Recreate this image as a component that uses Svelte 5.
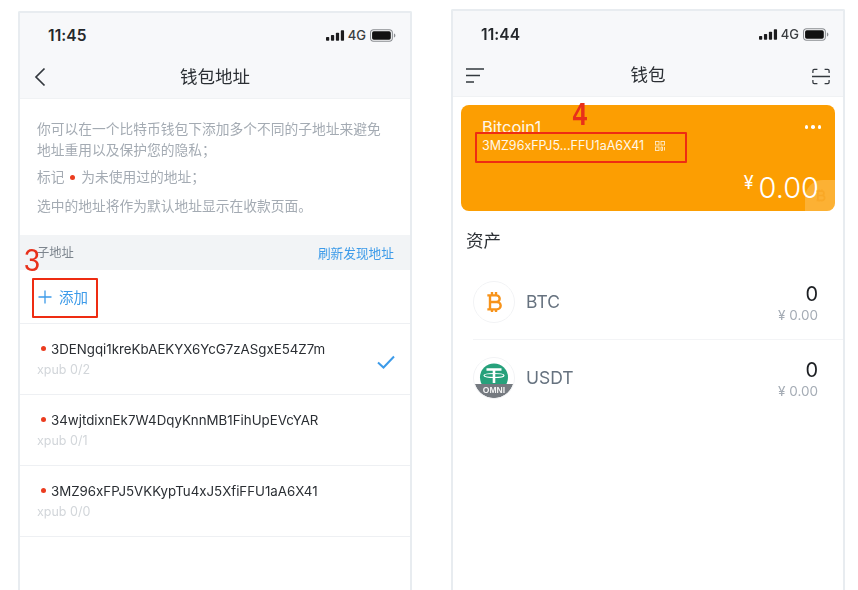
<script>
  const rows = [
    { addr: '3DENgqi1kreKbAEKYX6YcG7zASgxE54Z7m', path: 'xpub 0/2', on: true },
    { addr: '34wjtdixnEk7W4DqyKnnMB1FihUpEVcYAR', path: 'xpub 0/1', on: false },
    { addr: '3MZ96xFPJ5VKKypTu4xJ5XfiFFU1aA6X41', path: 'xpub 0/0', on: false }
  ];
</script>

{#snippet status(time)}
  <div class="status">
    <span class="time">{time}</span>
    <span class="sys">
      <svg class="sig" width="19" height="11" viewBox="0 0 20 11"><rect x="0" y="7" width="3.4" height="4" rx=".8"/><rect x="5.200" y="5" width="3.4" height="6" rx=".8"/><rect x="10.400" y="2.500" width="3.4" height="8.500" rx=".8"/><rect x="15.600" y="0" width="3.4" height="11" rx=".8"/></svg>
      <span class="net">4G</span>
      <svg width="26" height="13" viewBox="0 0 25 12"><rect x=".5" y=".5" width="21" height="11" rx="3" fill="none" stroke="#8a8d91"/><rect x="2" y="2" width="18" height="8" rx="1.600" fill="#111"/><path d="M23 4v4c.9-.3 1.400-1 1.400-2s-.5-1.700-1.400-2z" fill="#8a8d91"/></svg>
    </span>
  </div>
{/snippet}

<div class="stage">
  <section class="phone left">
    <header class="top">
      {@render status('11:45')}
      <div class="nav">
        <svg class="back" width="12" height="20" viewBox="0 0 12 20"><path d="M10.500 1.500 2 10l8.500 8.500" fill="none" stroke="#33383e" stroke-width="1.700"/></svg>
        <h1>钱包地址</h1>
      </div>
    </header>
    <div class="desc">
      <p class="intro">你可以在一个比特币钱包下添加多个不同的子地址来避免<br />地址重用以及保护您的隐私；</p>
      <p class="mark">标记 <i class="dot"></i> 为未使用过的地址；</p>
      <p class="def">选中的地址将作为默认地址显示在收款页面。</p>
    </div>
    <div class="sub">
      <span>子地址</span>
      <span class="link">刷新发现地址</span>
    </div>
    <div class="add">
      <svg width="14" height="14" viewBox="0 0 14 14"><path d="M7 .5v13M.5 7h13" stroke="#3d9be9" stroke-width="1.300" fill="none"/></svg>
      <span>添加</span>
      <b class="box box3"></b>
      <b class="num num3">3</b>
    </div>
    {#each rows as r}
      <div class="row">
        <div>
          <div class="addr"><i class="dot"></i>{r.addr}</div>
          <div class="path">{r.path}</div>
        </div>
        {#if r.on}
          <svg class="check" width="18" height="14" viewBox="0 0 18 14"><path d="M1 7.500 6.500 12.500 17 1.500" fill="none" stroke="#3d9be9" stroke-width="2"/></svg>
        {/if}
      </div>
    {/each}
  </section>

  <section class="phone right">
    <header class="top">
      {@render status('11:44')}
      <div class="nav">
        <svg class="menu" width="18" height="15" viewBox="0 0 18 15"><path d="M0 1h18M0 7.500h14M0 14h8" stroke="#33383e" stroke-width="1.500" fill="none"/></svg>
        <h1>钱包</h1>
        <svg class="scan" width="18" height="17" viewBox="0 0 20 18"><path d="M1 5V2.500A1.500 1.500 0 0 1 2.500 1H6M14 1h3.500A1.500 1.500 0 0 1 19 2.500V5M1 13v2.500A1.500 1.500 0 0 0 2.500 17H6M14 17h3.500a1.500 1.500 0 0 0 1.500-1.500V13M0 9h20" stroke="#33383e" stroke-width="1.400" fill="none"/></svg>
      </div>
    </header>
    <div class="card">
      <div class="card-head">
        <span class="name">Bitcoin1</span>
        <span class="more"><i></i><i></i><i></i></span>
      </div>
      <div class="card-addr">
        <span>3MZ96xFPJ5...FFU1aA6X41</span>
        <svg width="10" height="10" viewBox="0 0 10 10" fill="none" stroke="#fff" stroke-width=".9" opacity=".8"><rect x=".5" y=".5" width="3.500" height="3.500"/><rect x=".5" y="6" width="3.500" height="3.500"/><rect x="6" y=".5" width="3.500" height="3.500"/><path d="M6 6h1.500v3.500H6zM9.500 6v3.500"/></svg>
      </div>
      <div class="bal"><span class="yen">¥</span><span class="amt">0.00</span></div>
      <div class="corner">
        <svg width="11" height="13" viewBox="0 0 24 30"><path d="M6 5h9a5 5 0 0 1 0 10H6h10a5.500 5.500 0 0 1 0 11H6zM3 5h6M3 26h6M9 1v4M15 1v4M9 26v3M15 26v3" fill="none" stroke="#f9a826" stroke-width="4"/></svg>
      </div>
      <b class="box box4"></b>
      <b class="num num4">4</b>
    </div>
    <h2>资产</h2>
    <div class="asset">
      <span class="ico">
        <svg width="16" height="22" viewBox="0 0 24 32"><path d="M6 6h9.500a5 5 0 0 1 0 10H6h10.500a5.500 5.500 0 0 1 0 11H6zM2 6h7M2 27h7M9 1v5M15 1v5M9 27v4M15 27v4" fill="none" stroke="#f7931a" stroke-width="3.600"/></svg>
      </span>
      <span class="sym">BTC</span>
      <span class="val"><span class="n">0</span><span class="c">¥ 0.00</span></span>
    </div>
    <div class="asset second">
      <span class="ico tether">
        <svg width="40" height="40" viewBox="0 0 40 40">
          <circle cx="20" cy="19.500" r="14" fill="#26a17b"/>
          <path d="M.9 26H39.100A20 20 0 0 1 .9 26z" fill="#757a80"/>
          <path d="M12.500 11.500h15M20 11.500V25" stroke="#fff" stroke-width="2.600" fill="none"/>
          <ellipse cx="20" cy="17.500" rx="10" ry="2" fill="none" stroke="#fff" stroke-width="1.200"/>
        </svg>
        <span class="omni">OMNI</span>
      </span>
      <span class="sym">USDT</span>
      <span class="val"><span class="n">0</span><span class="c">¥ 0.00</span></span>
    </div>
  </section>
</div>

<style>
  :global(body) { margin: 0; background: #fff; overflow: hidden; }
  .stage {
    width: 858px; height: 590px; overflow: hidden; display: flex; align-items: flex-start;
    gap: 39px; padding-left: 18px; box-sizing: border-box;
    font-family: Inter, "Noto Sans CJK SC", sans-serif; color: #1f2328;
    filter: blur(.35px);
  }
  .phone { width: 394px; height: 640px; border: 2px solid #e8ecf0; border-bottom: 0; box-sizing: border-box; border-radius: 2px 2px 0 0; flex: none; }
  .left { margin-top: 11px; }
  .right { margin-top: 9px; }
  .top { height: 86px; background: #f7f8fa; border-bottom: 1px solid #f0f2f4; box-sizing: border-box; }
  .status { height: 44px; display: flex; justify-content: space-between; align-items: center; padding: 0 14px 0 28px; box-sizing: border-box; }
  .right .status { padding-top: 2px; }
  .time { font-size: 15.500px; font-weight: 600; letter-spacing: .1px; color: #24272b; }
  .sys { display: flex; align-items: center; gap: 4px; }
  .sig { fill: #1c1c1e; margin-right: -1px; }
  .net { font-size: 13px; font-weight: 500; color: #3a3d40; }
  .nav { position: relative; height: 36px; display: flex; justify-content: center; align-items: center; }
  .nav h1 { margin: 0; font-size: 17.500px; font-weight: 400; color: #2b2f34; }
  .back { position: absolute; left: 14px; top: 10px; }
  .desc { height: 136px; padding: 20px 16px 0 17px; box-sizing: border-box; font-size: 13.750px; color: #a4abb3; }
  .desc p { margin: 0; line-height: 21px; }
  .mark { margin-top: 6px !important; }
  .def { margin-top: 8px !important; }
  .dot { display: inline-block; width: 5px; height: 5px; border-radius: 50%; background: #eb3c1f; vertical-align: 2px; margin: 0 2px; }
  .sub { height: 35px; background: #f2f4f6; display: flex; justify-content: space-between; align-items: center; padding: 0 16px 1px 17px; box-sizing: border-box; font-size: 12.300px; color: #7d858e; }
  .link { color: #3d9be9; font-size: 12.700px; }
  .add { position: relative; height: 54px; display: flex; align-items: center; gap: 7px; padding-left: 18px; border-bottom: 1px solid #eef0f3; box-sizing: border-box; font-size: 14.500px; color: #3d9be9; }
  .box { position: absolute; border: 2px solid #ee2c12; box-sizing: border-box; border-radius: 1px; }
  .box3 { left: 12px; top: 7.500px; width: 66px; height: 40px; }
  .box4 { left: 14px; top: 27px; width: 212px; height: 31px; }
  .num { position: absolute; font-family: "Liberation Sans", sans-serif; font-weight: 400; color: #e8301a; line-height: 1; }
  .num3 { left: 3px; top: -26px; font-size: 32px; transform: scaleX(.9); }
  .num4 { left: 110px; top: -7px; font-size: 32px; font-weight: 700; transform: scaleX(.82); }
  .row { height: 71px; display: flex; justify-content: space-between; align-items: center; padding: 0 15px 0 17px; border-bottom: 1px solid #eef0f3; box-sizing: border-box; }
  .addr { font-size: 13.300px; color: #2a2e33; line-height: 18px; display: flex; align-items: center; }
  .addr .dot { margin: 0 5px 0 4px; }
  .path { font-size: 12.500px; color: #d2d6da; line-height: 18px; margin-top: 3px; }
  .check { margin-top: 6px; }
  .menu { position: absolute; left: 13px; top: 13px; }
  .scan { position: absolute; right: 13px; top: 13px; }
  .card { position: relative; margin: 8px 8px 0 8px; height: 106px; border-radius: 8px; background: #fc9e02; color: #fff; box-sizing: border-box; padding: 12px 14px 0 21px; }
  .card-head { display: flex; justify-content: space-between; align-items: flex-start; }
  .name { font-size: 16.500px; line-height: 20px; opacity: .92; }
  .more { display: flex; gap: 3px; margin-top: 8px; }
  .more i { width: 3.500px; height: 3.500px; background: #fff; border-radius: 50%; }
  .card-addr { display: flex; align-items: center; gap: 11px; font-size: 12.500px; line-height: 18px; margin-top: 0; color: #fff8ea; }
  .bal { position: absolute; right: 16px; bottom: 5px; display: flex; align-items: flex-start; gap: 5px; line-height: 36px; }
  .yen { font-size: 18px; line-height: 26px; }
  .amt { font-size: 29px; font-weight: 300; }
  .corner { position: absolute; right: 0; bottom: 0; width: 30px; height: 31px; background: rgba(255,255,255,.2); border-radius: 18px 0 8px 0; display: flex; justify-content: center; align-items: center; }
  h2 { margin: 18px 0 0 13px; font-size: 17.500px; font-weight: 400; line-height: 24px; color: #2b2f34; }
  .asset { position: relative; display: flex; align-items: center; height: 76px; margin: 11px 0 0 20px; border-bottom: 1px solid #f3f4f6; box-sizing: border-box; padding-right: 25px; }
  .asset.second { margin-top: 0; border-bottom: 0; }
  .ico { position: relative; width: 42px; height: 42px; border: 1px solid #f2f3f5; border-radius: 50%; box-sizing: border-box; display: flex; justify-content: center; align-items: center; overflow: hidden; flex: none; }
  .omni { position: absolute; left: 0; right: 0; bottom: 3px; text-align: center; font-size: 9.500px; font-weight: 700; line-height: 10px; color: #f4f4f4; font-family: "Liberation Sans", sans-serif; transform: scaleX(.9); }
  .sym { margin-left: 11px; font-size: 17.500px; color: #66727f; }
  .second .sym { margin-top: -2px; }
  .val { margin-left: auto; padding-top: 4px; display: flex; flex-direction: column; align-items: flex-end; }
  .n { font-size: 20px; line-height: 22px; color: #1c1f23; font-weight: 400; }
  .c { font-size: 13.500px; line-height: 20px; color: #a5acb5; }
</style>
